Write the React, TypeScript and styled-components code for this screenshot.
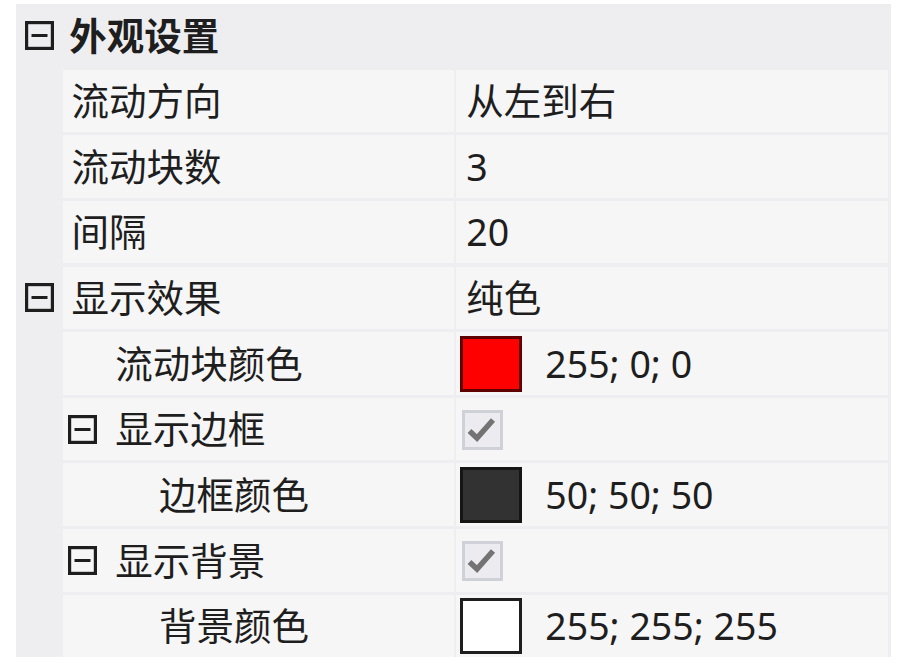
import styled, {createGlobalStyle} from 'styled-components';

const gutterBg = '#eeeef1';
const cellBg = '#f6f6f6';
const ink = '#1e1e1e';
const unit = 3.125;

const GlobalStyle = createGlobalStyle`
  html, body {
    margin: 0;
    background: #fff;
  }
  body {
    font-family: "Noto Sans", "Noto Sans CJK SC", sans-serif;
    color: ${ink};
  }
`;

type Value =
  | {kind: 'text'; text: string}
  | {kind: 'color'; fill: string; edge: string; text: string}
  | {kind: 'check'};

type Prop = {name: string; level: number; expandable?: boolean; value: Value};

const rows: Prop[] = [
  {name: '流动方向', level: 1, value: {kind: 'text', text: '从左到右'}},
  {name: '流动块数', level: 1, value: {kind: 'text', text: '3'}},
  {name: '间隔', level: 1, value: {kind: 'text', text: '20'}},
  {name: '显示效果', level: 1, expandable: true, value: {kind: 'text', text: '纯色'}},
  {name: '流动块颜色', level: 2, value: {kind: 'color', fill: '#ff0000', edge: '#5e0000', text: '255; 0; 0'}},
  {name: '显示边框', level: 2, expandable: true, value: {kind: 'check'}},
  {name: '边框颜色', level: 3, value: {kind: 'color', fill: '#323232', edge: '#151515', text: '50; 50; 50'}},
  {name: '显示背景', level: 2, expandable: true, value: {kind: 'check'}},
  {name: '背景颜色', level: 3, value: {kind: 'color', fill: '#ffffff', edge: '#1e1e1e', text: '255; 255; 255'}},
];

function Expander() {
  return (
    <ExpanderIcon width="29" height="29" viewBox="0 0 29 29">
      <rect x="1.6" y="1.6" width="25.8" height="25.8" fill="none" stroke={ink} strokeWidth="3.2"/>
      <line x1="6.5" y1="14.5" x2="22.5" y2="14.5" stroke={ink} strokeWidth="3"/>
    </ExpanderIcon>
  );
}

function ValueCell({value}: {value: Value}) {
  if (value.kind === 'check') {
    return (
      <ValueBox $pad={6}>
        <CheckBox>
          <svg width="35" height="34" viewBox="0 0 35 34">
            <path d="M4.5 18 L12 25 L28 7" fill="none" stroke="#737373" strokeWidth="5.5"/>
          </svg>
        </CheckBox>
      </ValueBox>
    );
  }
  if (value.kind === 'color') {
    return (
      <ValueBox $pad={3.3}>
        <Swatch $fill={value.fill} $edge={value.edge}/>
        <Text>{value.text}</Text>
      </ValueBox>
    );
  }
  return (
    <ValueBox $pad={10}>
      <Text>{value.text}</Text>
    </ValueBox>
  );
}

export default function App() {
  return (
    <>
      <GlobalStyle/>
      <Grid>
        <CategoryRow>
          <Gutter><Expander/></Gutter>
          <CategoryTitle>外观设置</CategoryTitle>
        </CategoryRow>
        {rows.map(row => (
          <Row key={row.name}>
            <Gutter>{row.level === 1 && row.expandable && <Expander/>}</Gutter>
            <NameCell $level={row.level} $icon={!!row.expandable && row.level > 1}>
              {row.expandable && row.level > 1 && <Expander/>}
              <Text>{row.name}</Text>
            </NameCell>
            <ValueCell value={row.value}/>
          </Row>
        ))}
      </Grid>
    </>
  );
}

const Grid = styled.div`
  margin: 4px 0 0 16px;
  width: ${280 * unit}px;
  padding-right: 2.7px;
  box-sizing: border-box;
  background: ${gutterBg};
  display: flex;
  flex-direction: column;
  gap: ${unit}px;
`;

const Row = styled.div`
  display: flex;
  height: ${20 * unit}px;
  gap: 2.4px;
`;

const CategoryRow = styled(Row)`
  gap: 0;
`;

const Gutter = styled.div`
  flex: 0 0 ${15 * unit}px;
  margin-right: -2.4px;
  display: flex;
  align-items: center;
  padding-left: 9px;
  box-sizing: border-box;
`;

const CategoryTitle = styled.div`
  display: flex;
  align-items: center;
  padding-left: 8.7px;
  font-size: ${12 * unit}px;
  font-weight: 700;
  line-height: 1;
`;

const ExpanderIcon = styled.svg`
  flex: none;
  display: block;
`;

const NameCell = styled.div<{$level: number; $icon: boolean}>`
  flex: 0 0 391px;
  background: ${cellBg};
  display: flex;
  align-items: center;
  gap: 18px;
  box-sizing: border-box;
  padding-left: ${({$level, $icon}) => 8.7 + ($level - 1) * 14 * unit - ($icon ? 47 : 0)}px;
`;

const ValueBox = styled.div<{$pad: number}>`
  flex: 1;
  background: ${cellBg};
  display: flex;
  align-items: center;
  box-sizing: border-box;
  padding-left: ${({$pad}) => $pad}px;
  gap: 23px;
`;

const Text = styled.span`
  font-size: ${12 * unit}px;
  line-height: 1;
  white-space: nowrap;
`;

const Swatch = styled.div<{$fill: string; $edge: string}>`
  width: 62.7px;
  height: 56px;
  box-sizing: border-box;
  background: ${({$fill}) => $fill};
  border: 3px solid ${({$edge}) => $edge};
  margin-top: 1px;
`;

const CheckBox = styled.div`
  width: 41px;
  height: 40px;
  box-sizing: border-box;
  border: 3px solid #cfd0d8;
  background: #ecebf0;
  margin-top: 2px;
  display: flex;
  align-items: center;
  justify-content: center;
`;
